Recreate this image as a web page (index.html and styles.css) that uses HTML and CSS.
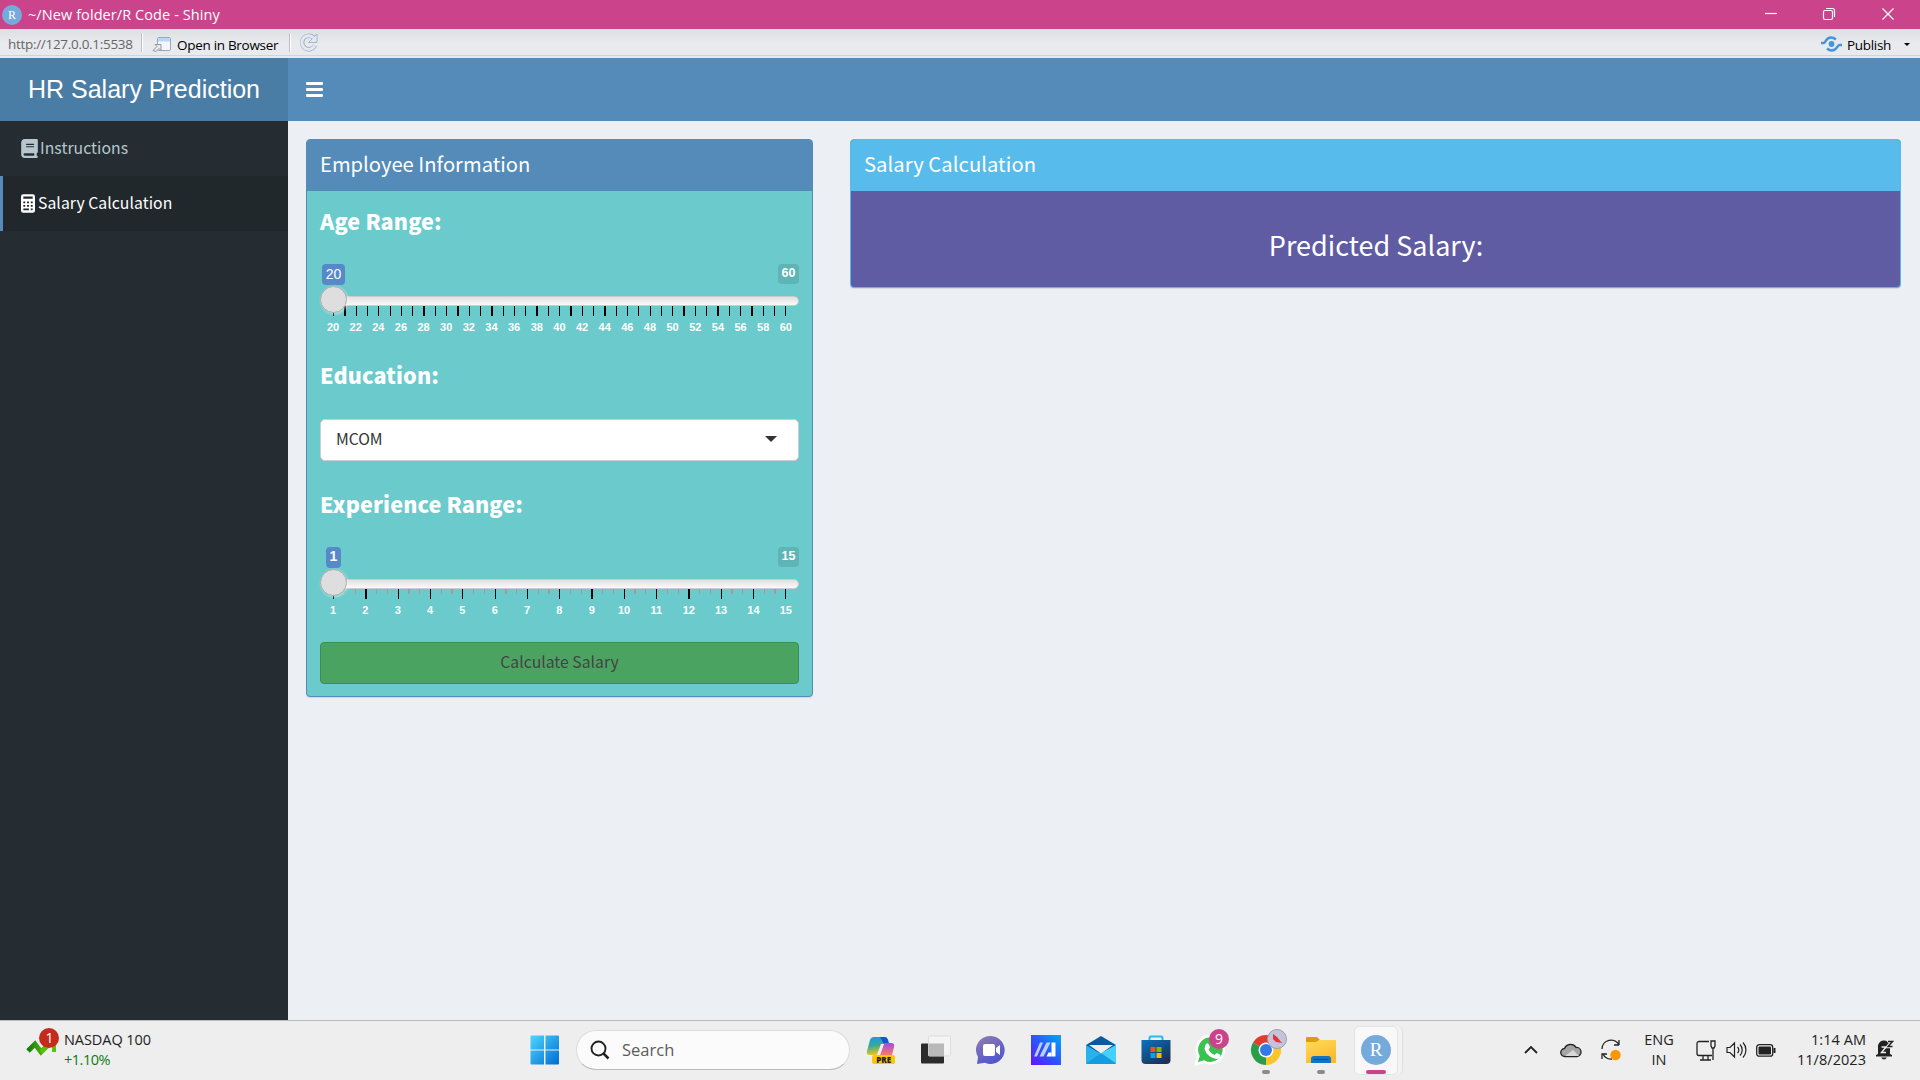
FILE: index.html
```html
<!DOCTYPE html>
<html lang="en">
<head>
<meta charset="utf-8">
<title>~/New folder/R Code - Shiny</title>
<link rel="stylesheet" href="styles.css">
</head>
<body>
<div class="titlebar">
  <svg class="app-icon" viewBox="0 0 20 20"><circle cx="10" cy="10" r="10" fill="#75aadb"/><text x="10" y="13.500" text-anchor="middle" class="r-small">R</text></svg>
  <span class="title-text">~/New folder/R Code - Shiny</span>
  <svg class="win-controls" viewBox="0 0 160 29" fill="none" stroke="#fff" stroke-width="1.200"><path d="M5 13.500h12"/><rect x="63.500" y="10.500" width="9" height="9" rx="1.500"/><path d="M66 8.500h6.500a2 2 0 0 1 2 2v6.500"/><path d="M122.500 8.500l11 11m0-11l-11 11"/></svg>
</div>
<div class="toolbar">
  <span class="url">http://127.0.0.1:5538</span>
  <i class="sep"></i>
  <svg class="open-icon" viewBox="0 0 20 15"><rect x="5.500" y=".5" width="13" height="13" rx="1.500" fill="#f4f6fa" stroke="#9aa8ba"/><path d="M6 1h12v3.500H6z" fill="#b9d6f5"/><path d="M1 13.500l4-4-2-2h6v6l-2-2-3 3z" fill="#e8ebf0" stroke="#8d99a8"/></svg>
  <span class="open-text">Open in Browser</span>
  <i class="sep"></i>
  <svg class="reload-icon" viewBox="0 0 20 20" fill="none"><path d="M14.500 4.500A6.800 6.800 0 1 0 16 12.500" stroke="#a9b3c2" stroke-width="4.600"/><path d="M18 1v8.500H9.500z" fill="#e3e9f4" stroke="#a9b3c2"/><path d="M14.500 4.800A6.800 6.800 0 1 0 15.700 12.500" stroke="#e3e9f4" stroke-width="2.900"/></svg>
  <svg class="publish-icon" viewBox="0 0 21 16" fill="none" stroke="#4694dd" stroke-width="2.400"><circle cx="10.500" cy="8" r="2.900" fill="#4694dd" stroke="none"/><path d="M0 7h2.500C5 7 4.500 1.500 10 1.500c2 0 3.500.7 5 2M21 9h-2.500C16 9 16.500 14.500 11 14.500c-2 0-3.500-.7-5-2"/></svg>
  <span class="publish-text">Publish</span>
  <i class="mini-caret"></i>
</div>
<header class="header">
  <div class="logo">HR Salary Prediction</div>
  <div class="bars"><i></i><i></i><i></i></div>
</header>
<div class="main">
  <nav class="sidebar">
    <a class="item">
      <svg width="17" height="19" viewBox="0 0 448 512" fill="currentColor"><path d="M96 0C43 0 0 43 0 96v320c0 53 43 96 96 96h320c17.700 0 32-14.300 32-32s-14.300-32-32-32v-64c17.700 0 32-14.300 32-32V32c0-17.700-14.300-32-32-32H96zm0 384h256v64H96c-17.700 0-32-14.300-32-32s14.300-32 32-32zm48-256h192c8.800 0 16 7.200 16 16s-7.200 16-16 16H144c-8.800 0-16-7.200-16-16s7.200-16 16-16zm0 64h192c8.800 0 16 7.200 16 16s-7.200 16-16 16H144c-8.800 0-16-7.200-16-16s7.200-16 16-16z"/></svg>
      <span>Instructions</span>
    </a>
    <a class="item active">
      <svg width="14" height="19" viewBox="0 0 384 512"><rect width="384" height="512" rx="64" fill="#fff"/><path fill="#21282b" d="M64 64h256v64H64zM64 200h52v52H64zM166 200h52v52h-52zM268 200h52v52h-52zM64 296h52v52H64zM166 296h52v52h-52zM268 296h52v52h-52zM64 392h154v52H64zM268 392h52v52h-52z"/></svg>
      <span>Salary Calculation</span>
    </a>
  </nav>
  <main class="content">
    <section class="box box-primary">
      <h3 class="box-title">Employee Information</h3>
      <div class="box-body">
        <h4 class="field-label">Age Range:</h4>
        <div class="slider">
          <div class="slider-values"><span class="value two">20</span><span class="limit">60</span></div>
          <div class="track"><i class="handle"></i></div>
          <svg class="ticks" viewBox="0 0 479 10" shape-rendering="crispEdges" stroke="#000"><path d="M13.500 0v10M36.500 0v10M47.500 0v10M58.500 0v10M70.500 0v10M81.500 0v10M92.500 0v10M115.500 0v10M126.500 0v10M149.500 0v10M160.500 0v10M183.500 0v10M194.500 0v10M205.500 0v10M228.500 0v10M239.500 0v10M262.500 0v10M273.500 0v10M296.500 0v10M307.500 0v10M318.500 0v10M330.500 0v10M341.500 0v10M352.500 0v10M375.500 0v10M386.500 0v10M409.500 0v10M420.500 0v10M443.500 0v10M454.500 0v10M465.500 0v10"/><path stroke-width="2" d="M25 0v10M104 0v10M138 0v10M172 0v10M217 0v10M251 0v10M285 0v10M364 0v10M398 0v10M432 0v10"/></svg>
          <div class="labels"><span>20</span><span>22</span><span>24</span><span>26</span><span>28</span><span>30</span><span>32</span><span>34</span><span>36</span><span>38</span><span>40</span><span>42</span><span>44</span><span>46</span><span>48</span><span>50</span><span>52</span><span>54</span><span>56</span><span>58</span><span>60</span></div>
        </div>
        <h4 class="field-label education">Education:</h4>
        <div class="select"><span>MCOM</span><i class="caret"></i></div>
        <h4 class="field-label experience">Experience Range:</h4>
        <div class="slider">
          <div class="slider-values"><span class="value one">1</span><span class="limit">15</span></div>
          <div class="track"><i class="handle"></i></div>
          <svg class="ticks" viewBox="0 0 479 10" shape-rendering="crispEdges" stroke="#000"><g stroke="#a39a9a"><path d="M24.500 0v5M35.500 0v5M56.500 0v5M67.500 0v5M99.500 0v5M121.500 0v5M153.500 0v5M164.500 0v5M196.500 0v5M218.500 0v5M250.500 0v5M261.500 0v5M282.500 0v5M293.500 0v5M325.500 0v5M347.500 0v5M358.500 0v5M379.500 0v5M390.500 0v5M422.500 0v5M444.500 0v5"/><path stroke-width="2" d="M89 0v5M132 0v5M186 0v5M229 0v5M315 0v5M412 0v5M455 0v5"/></g><path d="M13.500 0v10M78.500 0v10M110.500 0v10M142.500 0v10M175.500 0v10M207.500 0v10M239.500 0v10M304.500 0v10M336.500 0v10M401.500 0v10M433.500 0v10M465.500 0v10"/><path stroke-width="2" d="M46 0v10M272 0v10M369 0v10"/></svg>
          <div class="labels"><span>1</span><span>2</span><span>3</span><span>4</span><span>5</span><span>6</span><span>7</span><span>8</span><span>9</span><span>10</span><span>11</span><span>12</span><span>13</span><span>14</span><span>15</span></div>
        </div>
        <div class="button">Calculate Salary</div>
      </div>
    </section>
    <section class="box box-info">
      <h3 class="box-title">Salary Calculation</h3>
      <div class="result">Predicted Salary:</div>
    </section>
  </main>
</div>
<footer class="taskbar">
  <div class="widget">
    <svg width="36" height="34" viewBox="0 0 36 34"><defs><linearGradient id="g"><stop offset="0" stop-color="#107c10"/><stop offset="1" stop-color="#6bc90c"/></linearGradient></defs><path d="M2 24l7-7 6 8 8-8" fill="none" stroke="url(#g)" stroke-width="5"/><path d="M15 25l10-9h3v9" fill="none" stroke="#5cbf10" stroke-width="4"/><circle cx="23" cy="11" r="10" fill="#c42b1c"/><text x="23.500" y="16" text-anchor="middle" class="badge-text">1</text></svg>
    <div class="widget-text"><span>NASDAQ 100</span><br><span class="gain">+1.10%</span></div>
  </div>
  <div class="cell"><svg width="30" height="30" viewBox="0 0 30 30"><defs><linearGradient id="w2" x1="0" y1="0" x2="29" y2="29" gradientUnits="userSpaceOnUse"><stop offset="0" stop-color="#50d8ff"/><stop offset="1" stop-color="#006cd2"/></linearGradient></defs><path fill="url(#w2)" d="M1.500.5H14v14H.5v-13a1 1 0 0 1 1-1zM15.500.5H28a1 1 0 0 1 1 1v13H15.500zM.5 15.500H14v14H1.500a1 1 0 0 1-1-1zM15.500 15.500H29v13a1 1 0 0 1-1 1H15.500z"/></svg></div>
  <div class="search"><svg width="20" height="20" viewBox="0 0 20 20" fill="none" stroke="#222"><circle cx="8.500" cy="8.500" r="7" stroke-width="1.900"/><path d="M13.500 13.500l5 5" stroke-width="2.500"/></svg><span>Search</span></div>
  <div class="cell"><svg width="30" height="30" viewBox="0 0 30 30"><defs><linearGradient id="c1" x2=".2" y2="1"><stop offset="0" stop-color="#1797f5"/><stop offset=".5" stop-color="#36a89a"/><stop offset="1" stop-color="#e8c51d"/></linearGradient><linearGradient id="c2" x2="0" y2="1"><stop offset="0" stop-color="#a04be8"/><stop offset="1" stop-color="#ff7a5c"/></linearGradient></defs><path d="M8 2h10q3 0 4 3l1 4h-4q-3 0-4 3l-2 5q-1 3-4 3H4q-4 0-3-4L4 5q1-3 4-3z" fill="url(#c1)"/><path d="M14 2h5q2 0 3 3l1 4h-5z" fill="#1555d4"/><path d="M18 8h7q4 0 3 4l-2 8H14z" fill="url(#c2)"/><path d="M15 9h3l-4 11h-3z" fill="#f3eef5"/><rect x="6" y="20" width="23" height="9" rx="2" fill="#ffc40c"/><text x="17.700" y="27.500" text-anchor="middle" class="pre">PRE</text></svg></div>
  <div class="cell"><svg width="30" height="30" viewBox="0 0 30 30"><rect y="8.500" width="23" height="20" rx="1" fill="#2b2b2b"/><rect x="7.500" y="1" width="22" height="20" rx="1" fill="#f4f4f4" stroke="#ddd"/><path d="M7.500 8.500H23V21H7.500z" fill="#b9b9b9"/></svg></div>
  <div class="cell"><svg width="30" height="30" viewBox="0 0 30 30"><defs><linearGradient id="t" x2=".5" y2="1"><stop offset="0" stop-color="#947cac"/><stop offset="1" stop-color="#5058cf"/></linearGradient></defs><path d="M15 1a14 14 0 1 1-6 26.800L1 29l1-7A14 14 0 0 1 15 1z" fill="url(#t)"/><rect x="7" y="9" width="12" height="12" rx="2" fill="#fff"/><path d="M20 13l4-3v10l-4-3z" fill="#fff"/></svg></div>
  <div class="cell"><svg width="30" height="30" viewBox="0 0 30 30"><defs><linearGradient id="m" x1="0" y1="1" x2="1" y2="0"><stop offset="0" stop-color="#6413ff"/><stop offset=".5" stop-color="#2b57fa"/><stop offset="1" stop-color="#00a9fb"/></linearGradient></defs><path d="M0 0h30v30H0z" fill="url(#m)"/><path d="M3 21.500L9 7.500h3L6 21.500zM8.500 21.500L15.500 7.500h4L12.500 21.500z" fill="#b8cfff"/><path d="M20.500 7.500h4v14h-4z" fill="#fff"/><path d="M17.500 17.500h3v4H15.500z" fill="#fff"/></svg></div>
  <div class="cell"><svg width="30" height="30" viewBox="0 0 30 30"><path d="M0 10L15 1l15 9v8H0z" fill="#0a5a9e"/><path d="M0 10l15 9 15-9v18a1 1 0 0 1-1 1H1a1 1 0 0 1-1-1z" fill="#28b1ec"/><path d="M15 18l15-8v18z" fill="#45d2fa"/><path d="M3 10h24L15 18.500z" fill="#eee"/><path d="M0 29l15-11 15 11z" fill="#149ce0"/></svg></div>
  <div class="cell"><svg width="30" height="30" viewBox="0 0 30 30"><defs><linearGradient id="s" x2=".7" y2="1"><stop offset="0" stop-color="#0873bd"/><stop offset="1" stop-color="#1c3155"/></linearGradient></defs><path d="M8.500 7V3q0-1.500 1.500-1.500h10q1.500 0 1.500 1.500v4" fill="none" stroke="#28b9ee" stroke-width="2"/><path d="M.5 5h29v20q0 4-4 4h-21q-4 0-4-4z" fill="url(#s)"/><path d="M9.500 12h5v5h-5z" fill="#f25022"/><path d="M15.500 12h5v5h-5z" fill="#7fba00"/><path d="M9.500 18h5v5h-5z" fill="#00a4ef"/><path d="M15.500 18h5v5h-5z" fill="#ffb900"/></svg></div>
  <div class="cell"><svg width="36" height="42" viewBox="0 0 36 42"><path d="M3 35l2.500-8A13.500 13.500 0 1 1 11 32.500z" fill="#3bc14f" stroke="#fff" stroke-width="2.500"/><path d="M13 15q2-2 3 1l1 2q0 1-1.500 2.500 2 4 6 5.500l2-2q1 0 4 2 0 4-4 4Q14 28 11.500 20q0-3 1.500-5z" fill="#fff"/><circle cx="26" cy="10" r="10" fill="#cb448b"/><text x="26" y="15" text-anchor="middle" class="badge-text">9</text></svg></div>
  <div class="cell running"><svg class="spill" width="36" height="42" viewBox="0 0 36 42"><path d="M18 21L5 13.500A15 15 0 0 1 31 13.500z" fill="#e33b2e"/><path d="M18 21L5 13.500A15 15 0 0 0 18 36l7-11z" fill="#2a9d48"/><path d="M18 21l13-7.500A15 15 0 0 1 18 36z" fill="#fcc52c"/><circle cx="18" cy="21" r="7.500" fill="#fff"/><circle cx="18" cy="21" r="6" fill="#3479e8"/><circle cx="29" cy="10" r="9.500" fill="#c3c4dc" stroke="#9d9daa"/><path d="M25 5l4 3 5 6-6-1-3-3z" fill="#e8303c"/></svg></div>
  <div class="cell running"><svg width="30" height="30" viewBox="0 0 30 30"><defs><linearGradient id="f" x2=".5" y2="1"><stop offset="0" stop-color="#ffdb5c"/><stop offset="1" stop-color="#fcba2c"/></linearGradient></defs><path d="M0 3q0-1 1-1h10l3 3v5H0z" fill="#dca006"/><path d="M0 7h10l3-2h16q1 0 1 1v22H0z" fill="url(#f)"/><path d="M5 28v-4q0-3 3-3h14q3 0 3 3v4z" fill="#0f75c9"/><path d="M8 24.500h14" stroke="#0a4d8e"/></svg></div>
  <div class="cell current"><div class="tile"><svg width="30" height="30" viewBox="0 0 30 30"><circle cx="15" cy="15" r="15" fill="#75aadb"/><text x="15" y="20.500" text-anchor="middle" class="r-large">R</text></svg></div></div>
  <div class="tray">
    <svg width="14" height="8" viewBox="0 0 14 8" fill="none" stroke="#222" stroke-width="1.800"><path d="M1 7l6-6 6 6"/></svg>
    <svg width="22" height="16" viewBox="0 0 22 16"><path d="M5 14.500a4 4 0 0 1-.5-8A6.500 6.500 0 0 1 16 5.500a4.500 4.500 0 0 1 1 9z" fill="#a5a5a5" stroke="#222" stroke-width="1.300"/><path d="M5 14l8-6 6 6z" fill="#d9d9d9"/></svg>
    <svg width="22" height="22" viewBox="0 0 22 22" fill="none" stroke="#222" stroke-width="1.300"><path d="M2 10a9 9 0 0 1 17-4V1m0 5h-5M2 20v-5h5m-4 0a9 9 0 0 0 9 5"/><circle cx="15.500" cy="16" r="5.200" fill="#ff9800" stroke="none"/></svg>
    <div class="lang">ENG<br>IN</div>
    <svg width="20" height="21" viewBox="0 0 20 21" fill="none" stroke="#222" stroke-width="1.300"><path d="M13 1.500H3A2 2 0 0 0 1 3.500v10a2 2 0 0 0 2 2h13M7 15.500V20m5-4.500V20M4 20h11M15 1h4v5l-1 2h-2l-1-2zM17 8v12"/></svg>
    <svg width="21" height="18" viewBox="0 0 21 18" fill="none" stroke="#222" stroke-width="1.200"><path d="M1 6.500h3L8.500 2v14L4 11.500H1zM11.500 6a4 4 0 0 1 0 6M14 3.500a8 8 0 0 1 0 11M17 1.500a11 11 0 0 1 0 15"/></svg>
    <svg width="20" height="13" viewBox="0 0 20 13"><rect x=".7" y=".7" width="16" height="11.500" rx="2.500" fill="none" stroke="#222" stroke-width="1.300"/><rect x="2.500" y="2.500" width="12.500" height="8" rx="1" fill="#222"/><path d="M17.500 4h2v5h-2z" fill="#222"/></svg>
    <div class="clock">1:14 AM<br>11/8/2023</div>
    <svg width="18" height="20" viewBox="0 0 18 20"><path d="M2 14V7.500a6 6 0 0 1 12-2V14l2 1v1.500H0V15zM5 17.500h6q-3 4-6 0z" fill="#222"/><path d="M5.500 7h4.500l-4.500 5.500H10" stroke="#eee" fill="none" stroke-width="1.400"/><path d="M11 1h5l-5 6h5" stroke="#eee" fill="#eee" stroke-width="2.500"/><path d="M12 1.500h4.500l-4.500 5h4.500" stroke="#222" fill="none" stroke-width="1.400"/></svg>
  </div>
</footer>
</body>
</html>
```
FILE: styles.css
```css
* { box-sizing: border-box; }
body {
  margin: 0;
  width: 1920px;
  height: 1080px;
  overflow: hidden;
  display: flex;
  flex-direction: column;
  background: #ecf0f5;
  font-family: "Noto Sans CJK SC", "Open Sans", sans-serif;
}
svg { display: block; flex: none; }
span { white-space: nowrap; }
h3, h4 { margin: 0; font-weight: 400; }

.titlebar, .toolbar, .taskbar { font-family: "Open Sans", sans-serif; }

/* Window chrome */
.titlebar {
  flex: none;
  height: 29px;
  display: flex;
  align-items: center;
  padding-left: 2px;
  background: #cb448b;
  color: #fff;
}
.app-icon { width: 20px; height: 20px; margin-right: 6px; }
.title-text { font-size: 14.5px; letter-spacing: .08px; }
.win-controls { width: 160px; height: 29px; margin-left: auto; }
.r-small { font: 12px "Liberation Serif", serif; fill: #fff; }
.r-large { font: 19px "Liberation Serif", serif; fill: #fff; }
.toolbar {
  flex: none;
  height: 29px;
  display: flex;
  align-items: center;
  padding: 3px 10px 0 8px;
  background: linear-gradient(#dedfe3, #e9eaee 50%);
  border-bottom: 2px solid #e6e9ed;
  box-shadow: inset 0 -1px #cfd3da;
  font-size: 13.5px;
  letter-spacing: -.3px;
  color: #000;
}
.url { width: 133px; color: #666; }
.sep { width: 2px; height: 19px; margin: -3px 9px 0 0; background: #bbbec6; border-right: 1px solid #fff; }
.open-icon { width: 20px; height: 15px; margin-right: 5px; }
.open-text { width: 112px; padding-top: 1px; }
.publish-text { padding-top: 1px; }
.reload-icon { width: 20px; height: 20px; margin: -2px 0 0 -1px; }
.publish-icon { width: 21px; height: 16px; margin: 0 5px 0 auto; }
.mini-caret { border: 3px solid transparent; border-top-color: #000; border-bottom: 0; margin-left: 13px; }

/* Dashboard header */
.header { flex: none; height: 63px; display: flex; background: #548bb8; }
.logo {
  width: 288px;
  background: #4a7da5;
  color: #fff;
  text-align: center;
  font: 25px/63px "Liberation Sans", sans-serif;
}
.bars { display: flex; flex-direction: column; gap: 3px; padding: 24px 18px; }
.bars i { width: 17px; height: 3px; border-radius: 1px; background: #fff; }

.main { flex: 1; display: flex; min-height: 0; }
.sidebar { width: 288px; background: #252d33; }
.item {
  height: 55px;
  display: flex;
  align-items: center;
  padding: 0 0 2px 18px;
  border-left: 3px solid transparent;
  color: #b8c7ce;
  font-size: 15.75px;
  letter-spacing: .05px;
}
.item svg { margin: 0 2px -1px 0; }
.item.active svg { margin-right: 3px; }
.item.active { background: #21282b; border-left-color: #548bb8; color: #fff; }

.content { flex: 1; display: flex; align-items: flex-start; gap: 37px; padding: 18px 19px 0 18px; }
.box { border-radius: 4px; border: 1px solid; overflow: hidden; box-shadow: 0 1px 1px rgba(0,0,0,.1); }
.box-primary { width: 507px; height: 558px; border-color: #548bb8; background: #6bcacc; }
.box-info { flex: 1; height: 149px; border-color: #57bbeb; background: #605ca3; }
.box-title { height: 51px; padding-left: 13px; font-size: 20.2px; line-height: 47px; color: #fff; }
.box-primary .box-title { background: #548bb8; }
.box-info .box-title { background: #57bbeb; letter-spacing: .06px; }
.box-body { padding: 0 13px; }
.result { padding: 32px 0 0 1px; text-align: center; font-size: 27px; line-height: 44px; color: #fff; }

.field-label { height: 73px; padding-top: 15px; font-size: 21.6px; line-height: 30px; font-weight: 900; letter-spacing: .13px; color: #fff; }
.field-label.education { height: 80px; padding-top: 21px; }
.field-label.experience { height: 86px; padding-top: 28px; }

.slider { height: 75px; font-family: "Liberation Sans", sans-serif; color: #fff; }
.slider-values { height: 32px; display: flex; justify-content: space-between; align-items: flex-start; }
.value { height: 21px; border-radius: 4px; background: #5789ca; text-align: center; font-size: 14px; line-height: 21px; }
.value.two { width: 23px; margin-left: 2px; }
.value.one { width: 15px; margin-left: 6px; font-weight: 700; line-height: 19px; }
.limit { width: 21px; height: 20px; border-radius: 4px; background: #5fb4b6; text-align: center; font-size: 12.5px; line-height: 19px; font-weight: 700; }
.track { position: relative; height: 10px; border: 1px solid #ccc; border-radius: 10px; background: linear-gradient(#e0e0e0, #fafafa); }
.handle {
  position: absolute;
  left: -1px;
  top: -11px;
  width: 27px;
  height: 27px;
  border: 1px solid #ababab;
  border-radius: 50%;
  background: #dedede;
  box-shadow: 1px 1px 3px rgba(255,255,255,.5);
  z-index: 1;
}
.ticks { width: 479px; height: 10px; }
.labels { display: flex; justify-content: space-between; margin: 5px 4px 0 4px; font-size: 11px; line-height: 13px; font-weight: 700; }
.labels span { width: 18px; text-align: center; }
.select {
  height: 42px;
  display: flex;
  justify-content: space-between;
  align-items: center;
  padding: 0 21px 3px 15px;
  border: 1px solid #ccc;
  border-radius: 5px;
  background: #fff;
  color: #333;
  font-size: 15.75px;
  letter-spacing: -.08px;
}
.caret { border: 6px solid transparent; border-top-color: #333; border-bottom: 0; }
.button {
  height: 42px;
  margin-top: 20px;
  border: 1px solid #3e8e53;
  border-radius: 4px;
  background: #4ba361;
  color: #444;
  text-align: center;
  font-size: 15.75px;
  line-height: 38px;
}

/* Desktop taskbar */
.taskbar {
  flex: none;
  height: 60px;
  display: flex;
  align-items: center;
  background: #eee;
  border-top: 1px solid #b8bac1;
  color: #222;
  font-size: 14.5px;
}
.widget { width: 517px; display: flex; padding-left: 26px; }
.widget svg { margin-top: -4px; }
.widget-text { margin-top: -1px; padding-left: 2px; line-height: 20px; letter-spacing: -.06px; }
.gain { color: #107c10; letter-spacing: -.5px; }
.badge-text { font: 14px "Open Sans", sans-serif; fill: #fff; }
.pre { font: 800 8px "Open Sans", sans-serif; fill: #222; }
.cell { position: relative; width: 55px; height: 59px; display: flex; align-items: center; justify-content: center; }
.cell svg { margin-top: -1px; }
.spill { overflow: visible; }
.search {
  width: 274px;
  height: 40px;
  margin: -1px 3px 0 4px;
  display: flex;
  align-items: center;
  gap: 12px;
  padding: 0 0 1px 13px;
  border: 1px solid #dcdcdc;
  border-bottom-color: #bbb;
  border-radius: 20px;
  background: #fbfbfb;
  color: #5c5c5c;
  font-size: 16.5px;
}
.running::after, .current::after {
  content: "";
  position: absolute;
  bottom: 6px;
  width: 8px;
  height: 4px;
  border-radius: 2px;
  background: #8b8b8b;
}
.current::after { width: 20px; background: #cb448b; }
.tile {
  width: 44px;
  height: 49px;
  margin-top: -1px;
  display: flex;
  align-items: center;
  justify-content: center;
  border: 1px solid #e3e3e3;
  border-radius: 5px;
  background: #f8f8f8;
  box-shadow: 4px 0 0 #f3f3f3, 5px 0 0 #dedede;
}
.tray {
  margin: -1px 0 0 auto;
  display: grid;
  grid-template-columns: 40px 40px 40px 56px 38px 22px 38px 81px 38px;
  align-items: center;
  justify-items: center;
  padding-right: 16px;
}
.lang, .clock { line-height: 20px; text-align: center; }
.clock { justify-self: end; text-align: right; letter-spacing: .05px; }
```
